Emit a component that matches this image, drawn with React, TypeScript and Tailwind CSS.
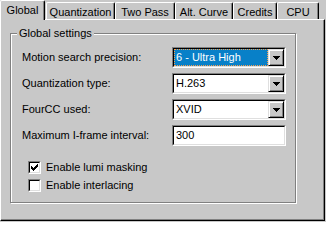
const tabs = [
  { label: "Global", width: "w-[45px]", active: true },
  { label: "Quantization", width: "w-[69px] ml-px", active: false },
  { label: "Two Pass", width: "w-[60px]", active: false },
  { label: "Alt. Curve", width: "w-[58px]", active: false },
  { label: "Credits", width: "w-[44px]", active: false },
  { label: "CPU", width: "w-[42px]", active: false },
];

function DropArrow() {
  return (
    <div className="w-[16px] h-full bg-[#c8c8c8] border-l border-t border-l-[#dfdfdf] border-t-[#dfdfdf] border-r border-b border-r-black border-b-black shadow-[inset_1px_1px_0_#fff,inset_-1px_-1px_0_#808080] flex items-center justify-center">
      <svg width="7" height="4" viewBox="0 0 7 4" shapeRendering="crispEdges">
        <path d="M0 0h7v1H0zM1 1h5v1H1zM2 2h3v1H2zM3 3h1v1H3z" fill="#000" />
      </svg>
    </div>
  );
}

function Sunken({ children }: { children: React.ReactNode }) {
  return (
    <div className="w-[114px] h-[21px] border-l border-t border-l-[#808080] border-t-[#808080] border-r border-b border-r-white border-b-white">
      <div className="h-full bg-white border-l border-t border-l-black border-t-black border-r border-b border-r-[#dfdfdf] border-b-[#dfdfdf] flex">
        {children}
      </div>
    </div>
  );
}

function Combo({ value, focused }: { value: string; focused?: boolean }) {
  return (
    <Sunken>
      <div className="flex-1 flex items-center">
        {focused ? (
          <div className="h-full w-full bg-[#0880c8] text-white border border-dotted border-[#f7a050] flex items-center pl-px">
            {value}
          </div>
        ) : (
          <span className="pl-[2px]">{value}</span>
        )}
      </div>
      <DropArrow />
    </Sunken>
  );
}

function CheckBox({ checked, label }: { checked: boolean; label: string }) {
  return (
    <div className="flex items-center gap-[5px] h-[13px]">
      <div className="w-[13px] h-[13px] bg-white border-l border-t border-l-[#808080] border-t-[#808080] border-r border-b border-r-white border-b-white">
        <div className="w-full h-full border-l border-t border-l-black border-t-black border-r border-b border-r-[#dfdfdf] border-b-[#dfdfdf] relative">
          {checked && (
            <svg
              className="absolute left-[1px] top-[1px]"
              width="7"
              height="7"
              viewBox="0 0 7 7"
              shapeRendering="crispEdges"
            >
              <path
                d="M0 2h1v3H0zM1 3h1v3H1zM2 4h1v3H2zM3 3h1v3H3zM4 2h1v3H4zM5 1h1v3H5zM6 0h1v3H6z"
                fill="#000"
              />
            </svg>
          )}
        </div>
      </div>
      <span>{label}</span>
    </div>
  );
}

export default function App() {
  return (
    <div className="w-[326px] h-[222px] bg-[#c8c8c8] text-black text-[11px] leading-[13px] font-['Liberation_Sans',Arial,sans-serif] overflow-hidden">
      {/* Tabs */}
      <div className="flex items-end h-[19px] relative z-10">
        {tabs.map((tab) => (
          <div
            key={tab.label}
            className={`${tab.width} ${
              tab.active ? "h-[20px] -mb-px pt-[3px]" : "h-[17px] pt-[3px]"
            } bg-[#c8c8c8] border-l border-t border-white border-r border-r-black shadow-[inset_-1px_0_0_#808080] rounded-t-[2px] flex justify-center whitespace-nowrap`}
          >
            {tab.label}
          </div>
        ))}
      </div>

      {/* Page */}
      <div className="w-[325px] h-[202px] border-l border-t border-white border-r border-b border-r-black border-b-black shadow-[inset_-1px_-1px_0_#808080]">
        <div className="relative ml-[9px] mt-[13px] w-[286px] h-[170px] border border-[#808080] shadow-[1px_1px_0_#fff,inset_1px_1px_0_#fff]">
          <span className="absolute left-[6px] top-[-7px] px-[2px] bg-[#c8c8c8]">
            Global settings
          </span>

          <div className="pl-[11px] pt-[13px]">
            <div className="grid grid-cols-[150px_114px] gap-y-[5px] items-center">
              <span>Motion search precision:</span>
              <Combo value="6 - Ultra High" focused />
              <span>Quantization type:</span>
              <Combo value="H.263" />
              <span>FourCC used:</span>
              <Combo value="XVID" />
              <span>Maximum I-frame interval:</span>
              <Sunken>
                <span className="pl-[2px] flex items-center">300</span>
              </Sunken>
            </div>

            <div className="mt-[15px] pl-[6px] flex flex-col gap-[5px]">
              <CheckBox checked label="Enable lumi masking" />
              <CheckBox checked={false} label="Enable interlacing" />
            </div>
          </div>
        </div>
      </div>
    </div>
  );
}
